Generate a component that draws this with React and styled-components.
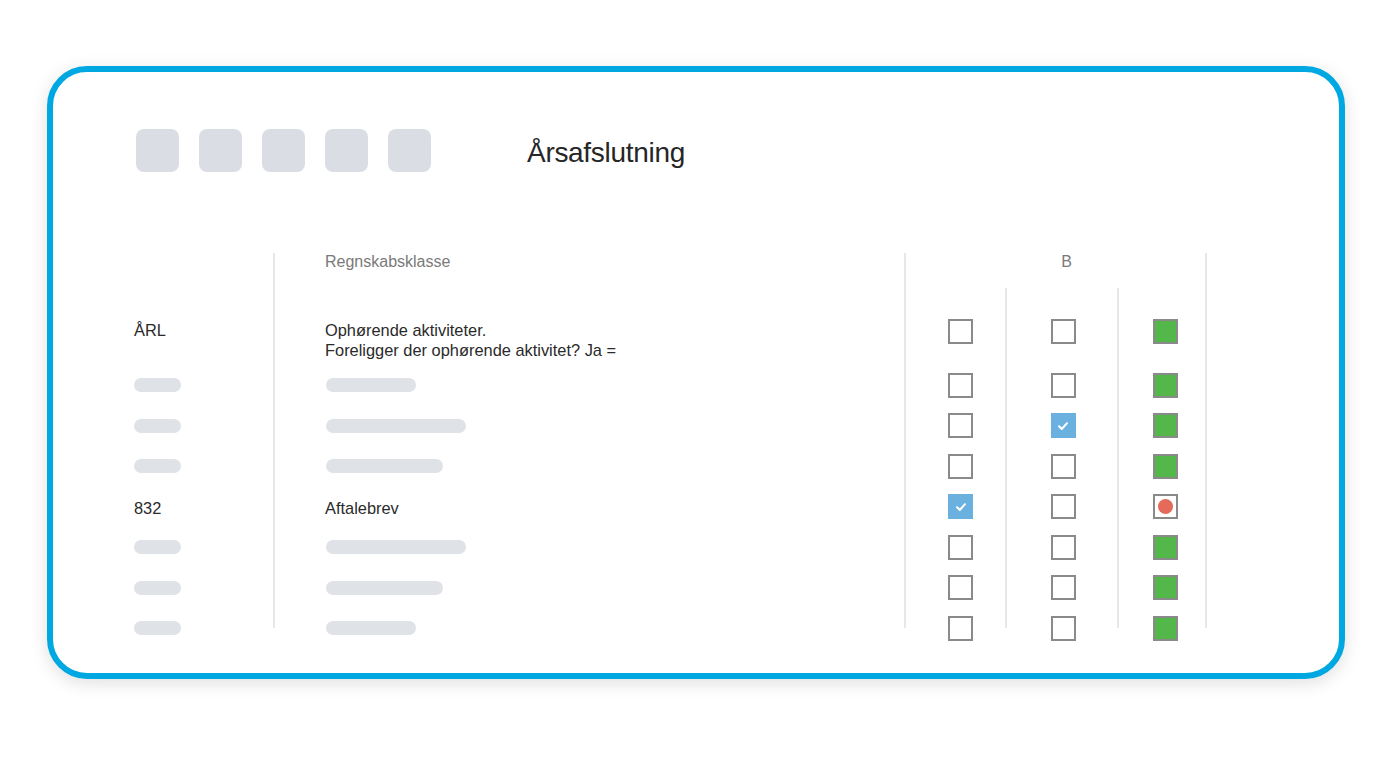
import React from "react";
import styled, { createGlobalStyle } from "styled-components";

const GlobalStyle = createGlobalStyle`
  html, body {
    margin: 0;
    background: #ffffff;
  }
  body {
    font-family: "Liberation Sans", Arial, sans-serif;
    color: #2b2b2b;
  }
  * {
    box-sizing: border-box;
  }
`;

const Page = styled.div`
  padding: 66px 47px 0;
  width: 1392px;
  height: 784px;
`;

const Frame = styled.div`
  height: 613px;
  border: 6px solid #00a8e1;
  border-radius: 40px;
  background: #ffffff;
  box-shadow: 0 4px 18px rgba(0, 0, 0, 0.13);
  padding: 57px 0 0 81px;
`;

const Toolbar = styled.div`
  display: flex;
  align-items: center;
  padding-left: 2px;
`;

const Tile = styled.div`
  width: 43px;
  height: 43px;
  border-radius: 8px;
  background: #dadee4;
  margin-right: 20px;
`;

const Title = styled.h1`
  margin: 4px 0 0 76px;
  font-size: 28px;
  font-weight: 400;
  color: #262626;
  letter-spacing: -0.3px;
`;

const Table = styled.div`
  display: flex;
  margin-top: 81px;
`;

const Column = styled.div`
  width: ${(p) => p.$width}px;
  height: 375px;
  border-right: 2px solid #e5e7eb;
  padding-left: ${(p) => p.$pad || 0}px;
`;

const HeaderCell = styled.div`
  height: 58px;
  font-size: 16px;
  line-height: 17px;
  color: #7a7a7a;
`;

const Row = styled.div`
  display: flex;
  align-items: ${(p) => (p.$first ? "flex-start" : "center")};
  height: ${(p) => (p.$first ? 54 : 40.5)}px;
  padding-top: ${(p) => (p.$first ? 8 : 0)}px;
`;

const Text = styled.div`
  font-size: 16.4px;
  line-height: 20px;
  color: #2a2a2a;
  padding-top: ${(p) => (p.$first ? 1 : 3)}px;
`;

const Bar = styled.div`
  width: ${(p) => p.$w}px;
  height: 14px;
  border-radius: 7px;
  background: #dfe2e7;
  margin-left: ${(p) => p.$offset || 0}px;
`;

const Group = styled.div`
  width: 301px;
  height: 375px;
  border-right: 2px solid #e5e7eb;
`;

const GroupHeader = styled.div`
  height: 35px;
  padding-left: 22px;
  text-align: center;
  font-size: 16px;
  line-height: 17px;
  color: #7a7a7a;
`;

const SubCols = styled.div`
  display: flex;
  height: 340px;
`;

const SubCol = styled.div`
  width: ${(p) => p.$width}px;
  height: 100%;
  border-right: ${(p) => (p.$last ? "none" : "2px solid #e5e7eb")};
  padding: 23px 0 0 ${(p) => p.$pad}px;
`;

const Box = styled.div`
  width: 25px;
  height: 25px;
  display: flex;
  align-items: center;
  justify-content: center;
  border: 2px solid ${(p) => (p.$state === "checked" ? "#6ab1e0" : "#8a8a8a")};
  background: ${(p) =>
    p.$state === "checked" ? "#6ab1e0" : p.$state === "green" ? "#54b749" : "#ffffff"};
`;

const Dot = styled.span`
  width: 15px;
  height: 15px;
  border-radius: 50%;
  background: #e46a5a;
`;

const Check = () => (
  <svg width="12" height="10" viewBox="0 0 12 10">
    <path d="M2 5.2 L4.8 8 L10 2.2" fill="none" stroke="#ffffff" strokeWidth="2" strokeLinecap="round" strokeLinejoin="round" />
  </svg>
);

const rows = [
  { code: "ÅRL", text: ["Ophørende aktiviteter.", "Foreligger der ophørende aktivitet? Ja ="], boxes: ["empty", "empty", "green"] },
  { bar: 90, boxes: ["empty", "empty", "green"] },
  { bar: 140, boxes: ["empty", "checked", "green"] },
  { bar: 117, boxes: ["empty", "empty", "green"] },
  { code: "832", text: ["Aftalebrev"], boxes: ["checked", "empty", "red"] },
  { bar: 140, boxes: ["empty", "empty", "green"] },
  { bar: 117, boxes: ["empty", "empty", "green"] },
  { bar: 90, boxes: ["empty", "empty", "green"] },
];

const subCols = [
  { width: 101, pad: 42 },
  { width: 113, pad: 44 },
  { width: 86, pad: 34, last: true },
];

function renderBox(state) {
  if (state === "checked") return <Box $state="checked"><Check /></Box>;
  if (state === "red") return <Box $state="empty"><Dot /></Box>;
  return <Box $state={state} />;
}

export default function App() {
  return (
    <Page>
      <GlobalStyle />
      <Frame>
        <Toolbar>
          <Tile />
          <Tile />
          <Tile />
          <Tile />
          <Tile />
          <Title>Årsafslutning</Title>
        </Toolbar>
        <Table>
          <Column $width={141}>
            <HeaderCell />
            {rows.map((r, i) => (
              <Row key={i} $first={i === 0}>
                {r.code ? <Text $first={i === 0}>{r.code}</Text> : <Bar $w={47} />}
              </Row>
            ))}
          </Column>
          <Column $width={631} $pad={50}>
            <HeaderCell>Regnskabsklasse</HeaderCell>
            {rows.map((r, i) => (
              <Row key={i} $first={i === 0}>
                {r.text ? (
                  <Text $first={i === 0}>
                    {r.text.map((line) => (
                      <div key={line}>{line}</div>
                    ))}
                  </Text>
                ) : (
                  <Bar $w={r.bar} $offset={1} />
                )}
              </Row>
            ))}
          </Column>
          <Group>
            <GroupHeader>B</GroupHeader>
            <SubCols>
              {subCols.map((c, ci) => (
                <SubCol key={ci} $width={c.width} $pad={c.pad} $last={c.last}>
                  {rows.map((r, i) => (
                    <Row key={i} $first={i === 0}>
                      {renderBox(r.boxes[ci])}
                    </Row>
                  ))}
                </SubCol>
              ))}
            </SubCols>
          </Group>
        </Table>
      </Frame>
    </Page>
  );
}
